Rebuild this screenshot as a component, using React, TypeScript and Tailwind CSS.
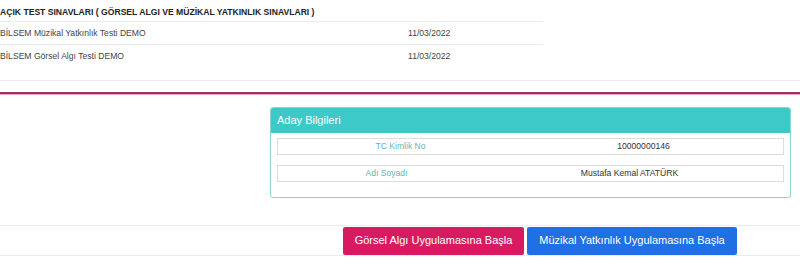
import React from "react";

const font = { fontFamily: '"Liberation Sans", Arial, sans-serif' };

function InfoRow({ label, value, labelW }: { label: string; value: string; labelW: string }) {
  return (
    <div className="flex h-[17px] items-center border border-[#dcdcdc] pr-[19px] text-[8.6px] leading-none">
      <div className={`${labelW} text-center text-[#5fb7b7]`}>{label}</div>
      <div className="flex-1 text-center text-[#333]">{value}</div>
    </div>
  );
}

export default function App() {
  return (
    <div className="relative h-[271px] w-[800px] overflow-hidden bg-white" style={font}>
      {/* top table */}
      <div className="w-[543px]">
        <div className="flex h-[22px] items-center border-b border-[#ececec] pt-[4px] text-[8.6px] font-bold leading-none text-[#222]">
          AÇIK TEST SINAVLARI ( GÖRSEL ALGI VE MÜZİKAL YATKINLIK SINAVLARI )
        </div>
        <div className="flex h-[23px] items-center border-b border-[#ececec] text-[8.6px] leading-none text-[#444]">
          <div className="w-[408px]">BİLSEM Müzikal Yatkınlık Testi DEMO</div>
          <div>11/03/2022</div>
        </div>
        <div className="flex h-[23px] items-center text-[8.6px] leading-none text-[#444]">
          <div className="w-[408px]">BİLSEM Görsel Algı Testi DEMO</div>
          <div>11/03/2022</div>
        </div>
      </div>
      <div className="mt-[12px] border-b border-[#f1e9ed]" />
      <div className="mt-[11px] h-[3px] border-t-2 border-b border-t-[#9e2f63] border-b-[#e7a6c4]" />

      {/* card */}
      <div className="ml-[270px] mt-[12px] w-[521px] overflow-hidden rounded-[3px] border border-[#8fd3d3]">
        <div className="flex h-[25px] items-center bg-[#3ec9c9] pl-[6px] text-[11px] text-white">Aday Bilgileri</div>
        <div className="flex flex-col gap-[10px] px-[6px] pb-[15px] pt-[5px]">
          <InfoRow label="TC Kimlik No" value="10000000146" labelW="w-[245px]" />
          <InfoRow label="Adı Soyadı" value="Mustafa Kemal ATATÜRK" labelW="w-[217px]" />
        </div>
      </div>

      {/* buttons */}
      <div className="mt-[27px] flex h-[31px] items-center gap-[3px] border-y border-[#ececec] pl-[343px]">
        <button className="h-[28px] w-[181px] rounded-[2px] bg-[#d81b60] text-[11px] text-white">
          Görsel Algı Uygulamasına Başla
        </button>
        <button className="h-[28px] w-[210px] rounded-[2px] bg-[#1f70e2] text-[11px] text-white">
          Müzikal Yatkınlık Uygulamasına Başla
        </button>
      </div>
    </div>
  );
}
